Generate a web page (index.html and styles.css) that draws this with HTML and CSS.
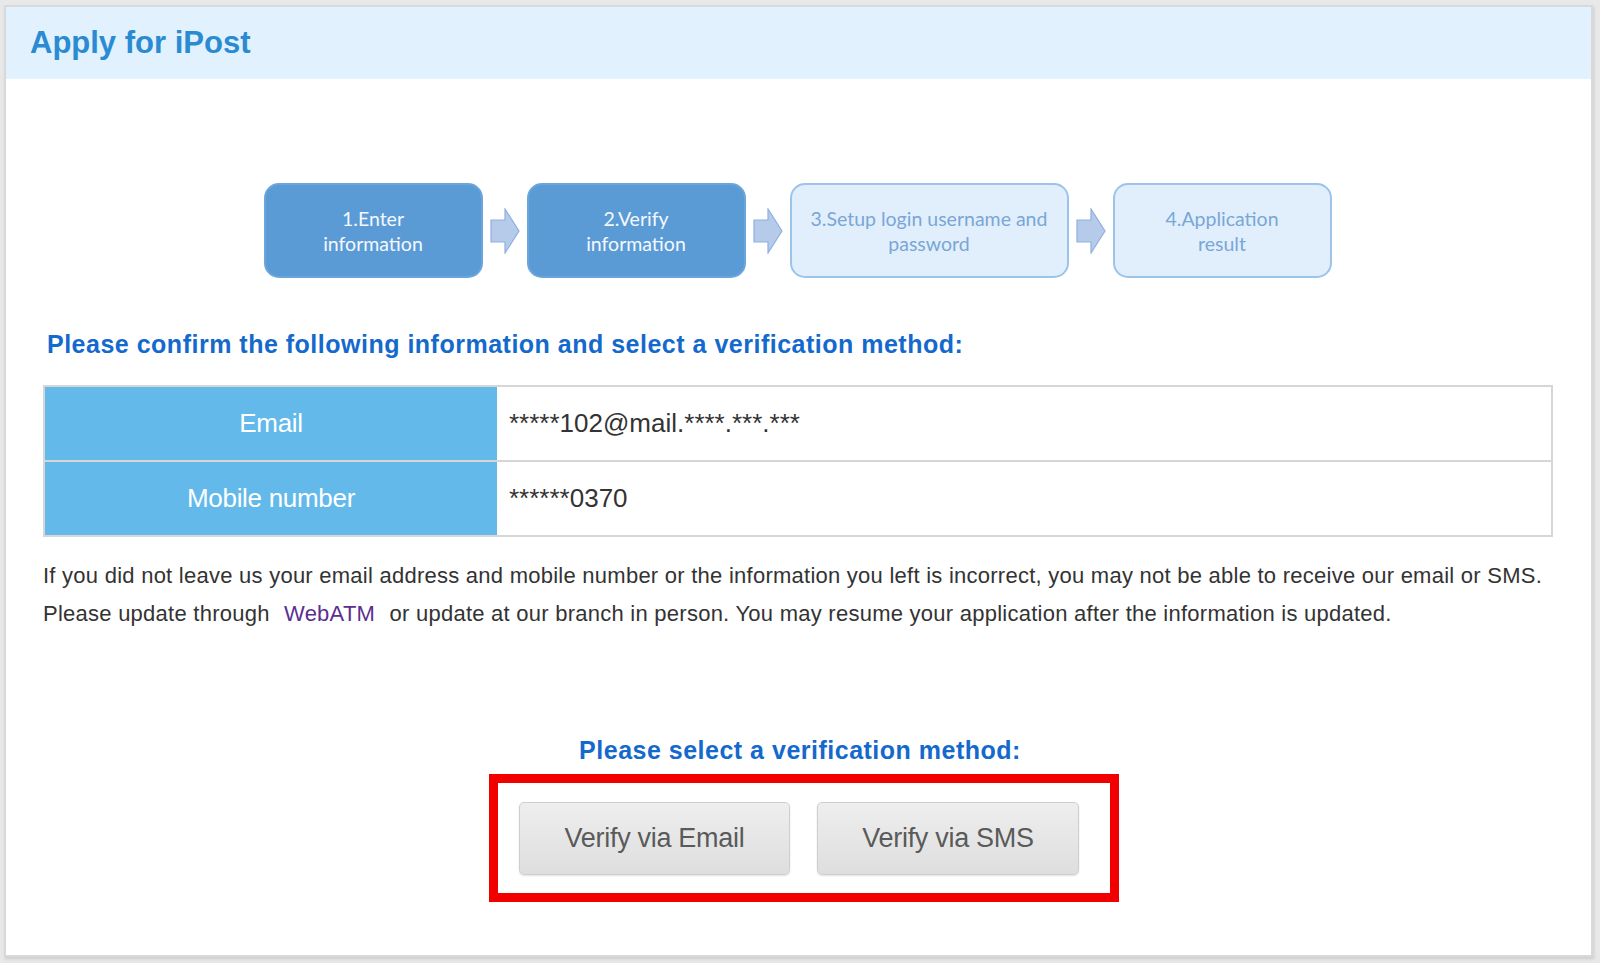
FILE: index.html
```html
<!DOCTYPE html>
<html lang="en">
<head>
    <meta charset="UTF-8">
    <title>Apply for iPost</title>
    <link rel="stylesheet" href="styles.css">
</head>
<body>
    <div class="frame">
        <div class="header">
            <h1>Apply for iPost</h1>
        </div>

        <div class="content">
            <div class="steps">
                <div class="step step-done">1.Enter<br>information</div>
                <svg class="arrow" width="30" height="46" viewBox="0 0 30 46"><polygon points="1,12 15,12 15,1 29,23 15,45 15,34 1,34"/></svg>
                <div class="step step-done">2.Verify<br>information</div>
                <svg class="arrow" width="30" height="46" viewBox="0 0 30 46"><polygon points="1,12 15,12 15,1 29,23 15,45 15,34 1,34"/></svg>
                <div class="step step-todo wide">3.Setup login username and<br>password</div>
                <svg class="arrow" width="30" height="46" viewBox="0 0 30 46"><polygon points="1,12 15,12 15,1 29,23 15,45 15,34 1,34"/></svg>
                <div class="step step-todo">4.Application<br>result</div>
            </div>

            <h2 class="confirm-title">Please confirm the following information and select a verification method:</h2>

            <table class="info">
                <tr>
                    <th>Email</th>
                    <td>*****102@mail.****.***.***</td>
                </tr>
                <tr>
                    <th>Mobile number</th>
                    <td>******0370</td>
                </tr>
            </table>

            <p class="note">If you did not leave us your email address and mobile number or the information you left is incorrect, you may not be able to receive our email or SMS.<br>
            Please update through <a href="#" class="link">WebATM</a> or update at our branch in person. You may resume your application after the information is updated.</p>

            <div class="verify">
                <h2 class="verify-title">Please select a verification method:</h2>
                <div class="highlight">
                    <button class="btn btn-email">Verify via Email</button>
                    <button class="btn btn-sms">Verify via SMS</button>
                </div>
            </div>
        </div>
    </div>
</body>
</html>
```

FILE: styles.css
```css
* {
    margin: 0;
    padding: 0;
    box-sizing: border-box;
}

html, body {
    height: 100%;
}

body {
    background-color: #e8e8e8;
    font-family: 'Liberation Sans', Arial, sans-serif;
    padding: 5px 7px 6px 4px;
}

.frame {
    background-color: white;
    border: 2px solid #d9d9d9;
    height: 100%;
    box-shadow: 1px 2px 3px rgba(0, 0, 0, 0.12);
}

.header {
    background-color: #e1f1fd;
    height: 72px;
    padding-left: 24px;
    display: flex;
    align-items: center;
}

.header h1 {
    color: #2a8bd2;
    font-size: 31px;
    font-weight: bold;
}

.content {
    padding: 104px 38px 0 37px;
}

/* progress steps */
.steps {
    display: flex;
    justify-content: center;
    align-items: center;
    gap: 7px;
    margin-left: -1px;
}

.step {
    width: 219px;
    height: 95px;
    border-radius: 15px;
    display: flex;
    align-items: center;
    justify-content: center;
    text-align: center;
    font-family: 'Lato', 'Open Sans', sans-serif;
    font-size: 19.5px;
    line-height: 25px;
}

.step.wide {
    width: 279px;
}

.step-done {
    background-color: #5b9bd5;
    border: 2px solid #6aa6dc;
    color: #f4f8fd;
}

.step-todo {
    background-color: #e1effc;
    border: 2px solid #9cc4ea;
    color: #7aa6d6;
}

.arrow {
    fill: #b6cbea;
    stroke: #8eb0df;
    stroke-width: 1.2;
}

/* confirm info */
.confirm-title {
    color: #1469cc;
    font-size: 25px;
    letter-spacing: 0.5px;
    font-weight: bold;
    margin: 51px 0 0 4px;
    line-height: 30px;
}

.info {
    width: 100%;
    border-collapse: collapse;
    margin-top: 26px;
    border: 2px solid #d6d6d6;
}

.info th {
    width: 453px;
    height: 75px;
    background-color: #63b9ea;
    color: white;
    font-weight: normal;
    font-size: 26px;
    letter-spacing: -0.3px;
    border-bottom: 2px solid #d6d6d6;
}

.info td {
    font-size: 26px;
    color: #333;
    padding-left: 12px;
    border-bottom: 2px solid #d6d6d6;
}

.note {
    color: #333;
    font-size: 22px;
    line-height: 38px;
    margin-top: 20px;
    letter-spacing: 0.25px;
    white-space: nowrap;
}

.link {
    color: #5b2f8f;
    text-decoration: none;
    margin: 0 8px;
}

/* verification */
.verify {
    display: flex;
    flex-direction: column;
    align-items: center;
    margin-top: 102px;
    margin-left: 12px;
}

.verify-title {
    color: #1469cc;
    font-size: 25px;
    letter-spacing: 0.5px;
    font-weight: bold;
    line-height: 30px;
    margin-right: 8px;
}

.highlight {
    border: 9px solid #f20000;
    padding: 19px 31px 18px 21px;
    display: flex;
    gap: 27px;
    margin-top: 9px;
}

.btn {
    height: 73px;
    border: 1px solid #cfcfcf;
    border-radius: 5px;
    background: linear-gradient(#eeeeee, #dedede);
    box-shadow: 0 1px 2px rgba(0, 0, 0, 0.12);
    color: #5a5a5a;
    font-family: 'Liberation Sans', Arial, sans-serif;
    font-size: 27px;
    letter-spacing: -0.3px;
    cursor: pointer;
}

.btn-email {
    width: 271px;
}

.btn-sms {
    width: 262px;
}
```
